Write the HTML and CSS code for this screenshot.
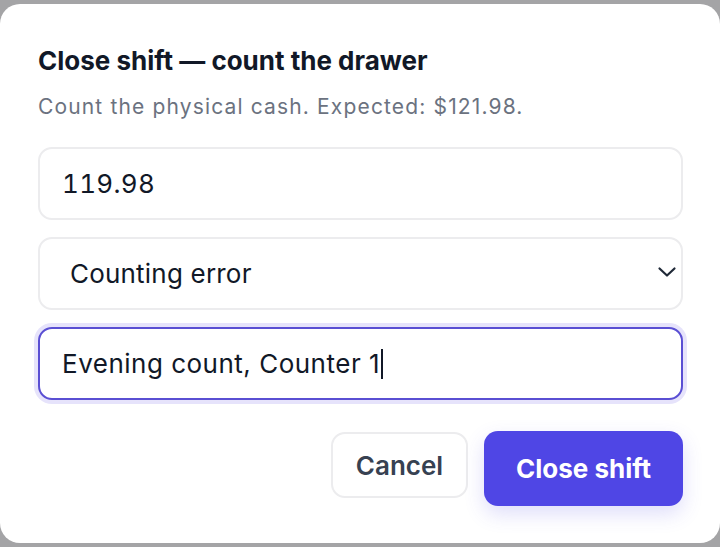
FILE: index.html
```html
<!DOCTYPE html>
<html lang="en">
<head>
    <meta charset="UTF-8">
    <meta name="viewport" content="width=device-width, initial-scale=1.0">
    <title>Close shift</title>
    <link rel="stylesheet" href="styles.css">
</head>
<body>

    <div class="modal">
        <h2 class="modal-title">Close shift — count the drawer</h2>
        <p class="modal-text">Count the physical cash. Expected: $121.98.</p>

        <div class="fields">
            <input class="field field-number" type="text" value="119.98">

            <div class="select-wrap">
                <select class="field field-select">
                    <option>Counting error</option>
                    <option>Missing cash</option>
                    <option>Other</option>
                </select>
                <svg class="chevron" width="20" height="12" viewBox="0 0 20 12" fill="none" stroke="#1f2937" stroke-width="2.2" stroke-linecap="round" stroke-linejoin="round">
                    <path d="M2.5 2.5l7.5 7 7.5-7"/>
                </svg>
            </div>

            <div class="field field-focus">Evening count, Counter 1<span class="caret"></span></div>
        </div>

        <div class="actions">
            <button class="btn btn-cancel">Cancel</button>
            <button class="btn btn-primary">Close shift</button>
        </div>
    </div>

</body>
</html>
```

FILE: styles.css
```css
body {
    margin: 0;
    background-color: #a4a4a6;
    font-family: Inter, "Noto Sans", sans-serif;
}

.modal {
    box-sizing: border-box;
    width: 720px;
    height: 539px;
    margin-top: 4px;
    padding: 41px 37px 0 38px;
    background-color: #fff;
    border-radius: 20px;
}

.modal-title {
    margin: 0;
    font-size: 26px;
    line-height: 32px;
    font-weight: 700;
    color: #111827;
}

.modal-text {
    margin: 16px 0 0;
    font-size: 21px;
    line-height: 28px;
    letter-spacing: 1.15px;
    color: #6b7280;
}

.fields {
    display: flex;
    flex-direction: column;
    gap: 17px;
    margin-top: 26px;
}

.field {
    box-sizing: border-box;
    display: flex;
    align-items: center;
    width: 100%;
    height: 73px;
    padding: 0 22px;
    border: 2px solid #ececee;
    border-radius: 14px;
    background-color: #fff;
    font-family: inherit;
    font-size: 26px;
    letter-spacing: 0.3px;
    color: #111827;
    outline: none;
}

.field-number {
    font-variant-numeric: tabular-nums;
    letter-spacing: 0.3px;
}

.select-wrap {
    position: relative;
}

.field-select {
    appearance: none;
    padding-left: 30px;
    letter-spacing: 0.2px;
}

.chevron {
    position: absolute;
    right: 6px;
    top: 29px;
}

.field-focus {
    border-color: #5a4fd3;
    box-shadow: 0 0 0 4px #e6e3fb;
    letter-spacing: 0.5px;
}

.caret {
    display: inline-block;
    width: 2px;
    height: 30px;
    margin-left: 1px;
    background-color: #111827;
}

.actions {
    display: flex;
    justify-content: flex-end;
    align-items: flex-start;
    gap: 16px;
    margin-top: 32px;
}

.btn {
    font-family: inherit;
    font-size: 26px;
    font-weight: 600;
    border-radius: 14px;
    cursor: pointer;
}

.btn-cancel {
    width: 137px;
    height: 66px;
    border: 2px solid #ececee;
    background-color: #fff;
    color: #374151;
}

.btn-primary {
    width: 199px;
    height: 75px;
    margin-top: -1px;
    border: none;
    background-color: #4f46e5;
    color: #fff;
    font-weight: 700;
    box-shadow: 0 8px 20px rgba(79, 70, 229, 0.18);
}
```
